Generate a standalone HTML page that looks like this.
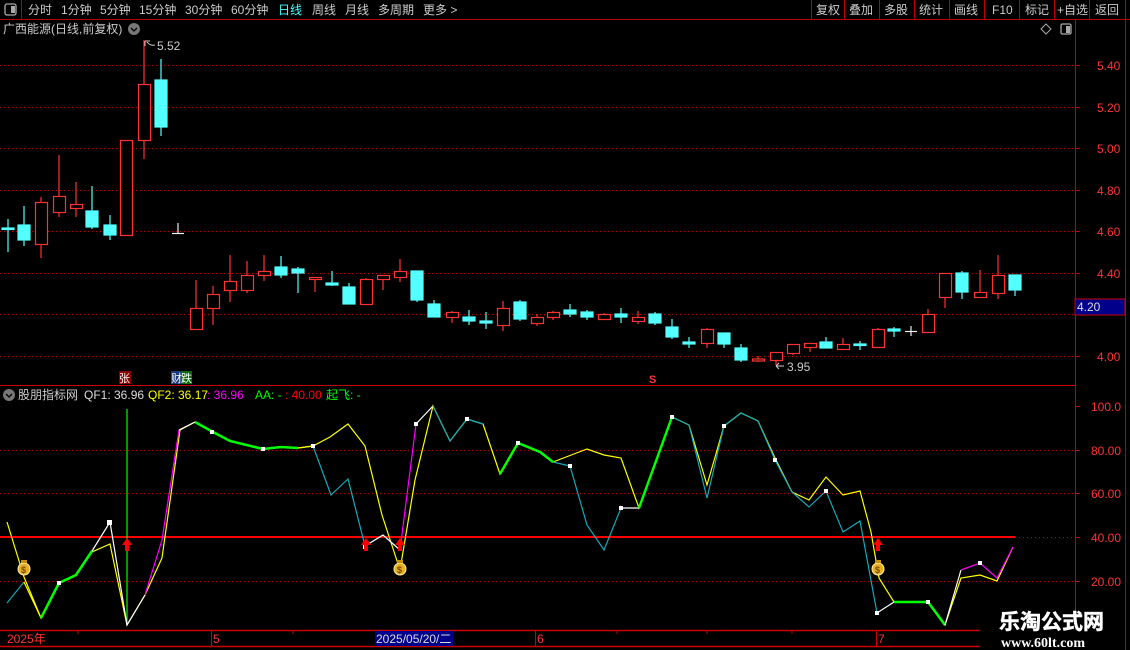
<!DOCTYPE html>
<html><head><meta charset="utf-8"><style>
html,body{margin:0;padding:0;background:#000;width:1130px;height:650px;overflow:hidden}
svg{display:block}
text{font-family:"Liberation Sans","Noto Sans CJK SC",sans-serif;font-size:12px}
</style></head><body>
<svg width="1130" height="650" viewBox="0 0 1130 650" xmlns="http://www.w3.org/2000/svg">
<rect width="1130" height="650" fill="#000"/>
<line x1="0" y1="19.5" x2="1130" y2="19.5" stroke="#b00" />
<line x1="21.5" y1="0" x2="21.5" y2="19" stroke="#b00"/>
<rect x="5" y="4" width="11" height="11" rx="2" fill="none" stroke="#aaa" stroke-width="1.3"/>
<rect x="11" y="6" width="4" height="7" fill="#aaa"/>
<g fill="#ccc">
<text x="28" y="14">分时</text><text x="61" y="14">1分钟</text><text x="100" y="14">5分钟</text><text x="139" y="14">15分钟</text><text x="185" y="14">30分钟</text><text x="231" y="14">60分钟</text>
<text x="278" y="14" fill="#4ff">日线</text><text x="312" y="14">周线</text><text x="345" y="14">月线</text><text x="378" y="14">多周期</text><text x="423" y="14">更多 &gt;</text>
<text x="816" y="14">复权</text><text x="849" y="14">叠加</text><text x="884" y="14">多股</text><text x="919" y="14">统计</text><text x="954" y="14">画线</text><text x="992" y="14">F10</text><text x="1025" y="14">标记</text><text x="1057" y="14">+自选</text><text x="1095" y="14">返回</text>
</g>
<g stroke="#b00"><line x1="811.5" y1="0" x2="811.5" y2="19"/><line x1="844.5" y1="0" x2="844.5" y2="19"/><line x1="879.5" y1="0" x2="879.5" y2="19"/><line x1="914.5" y1="0" x2="914.5" y2="19"/><line x1="949.5" y1="0" x2="949.5" y2="19"/><line x1="984.5" y1="0" x2="984.5" y2="19"/><line x1="1019.5" y1="0" x2="1019.5" y2="19"/><line x1="1054.5" y1="0" x2="1054.5" y2="19"/><line x1="1089.5" y1="0" x2="1089.5" y2="19"/><line x1="1125.5" y1="0" x2="1125.5" y2="650"/></g>
<text x="3" y="33" fill="#ccc">广西能源(日线,前复权)</text>
<circle cx="134" cy="29" r="6" fill="#777"/><path d="M131 28 L134 31 L137 28" stroke="#000" fill="none" stroke-width="1.3"/>
<path d="M1046 24 L1051 29 L1046 34 L1041 29 Z" fill="none" stroke="#aaa"/>
<rect x="1061" y="24" width="10" height="10" rx="1.5" fill="none" stroke="#aaa" stroke-width="1.3"/><rect x="1066" y="26" width="4" height="7" fill="#aaa"/>
<line x1="1075.5" y1="20" x2="1075.5" y2="630" stroke="#c00"/>
<g stroke="#b00" stroke-dasharray="1,3">
<line x1="0" y1="65.5" x2="1075" y2="65.5"/><line x1="0" y1="107.5" x2="1075" y2="107.5"/><line x1="0" y1="148.5" x2="1075" y2="148.5"/><line x1="0" y1="190.5" x2="1075" y2="190.5"/><line x1="0" y1="231.5" x2="1075" y2="231.5"/><line x1="0" y1="273.5" x2="1075" y2="273.5"/><line x1="0" y1="314.5" x2="1075" y2="314.5"/><line x1="0" y1="356.5" x2="1075" y2="356.5"/>
<line x1="0" y1="450.5" x2="1075" y2="450.5"/><line x1="0" y1="493.5" x2="1075" y2="493.5"/><line x1="1015" y1="537.5" x2="1075" y2="537.5"/><line x1="0" y1="581.5" x2="1075" y2="581.5"/>
</g>
<g stroke="#c00"><line x1="1075" y1="65.5" x2="1080" y2="65.5"/><line x1="1075" y1="107.5" x2="1080" y2="107.5"/><line x1="1075" y1="148.5" x2="1080" y2="148.5"/><line x1="1075" y1="190.5" x2="1080" y2="190.5"/><line x1="1075" y1="231.5" x2="1080" y2="231.5"/><line x1="1075" y1="273.5" x2="1080" y2="273.5"/><line x1="1075" y1="356.5" x2="1080" y2="356.5"/>
<line x1="1075" y1="406.5" x2="1080" y2="406.5"/><line x1="1075" y1="450.5" x2="1080" y2="450.5"/><line x1="1075" y1="493.5" x2="1080" y2="493.5"/><line x1="1075" y1="537.5" x2="1080" y2="537.5"/><line x1="1075" y1="581.5" x2="1080" y2="581.5"/></g>
<g fill="#f33">
<text x="1097" y="70">5.40</text><text x="1097" y="112">5.20</text><text x="1097" y="153">5.00</text><text x="1097" y="195">4.80</text><text x="1097" y="236">4.60</text><text x="1097" y="278">4.40</text><text x="1097" y="361">4.00</text>
<text x="1091" y="411">100.0</text><text x="1091" y="455">80.00</text><text x="1091" y="498">60.00</text><text x="1091" y="542">40.00</text><text x="1091" y="586">20.00</text>
</g>
<rect x="1075" y="299" width="50" height="16" fill="#00008a" stroke="#c00"/>
<text x="1077" y="311" fill="#ddd">4.20</text>
<g stroke-width="1.2">
<g stroke="#54ffff" fill="#54ffff">
<line x1="8" y1="219" x2="8" y2="252"/><rect x="2" y="228" width="12" height="1.5"/>
<line x1="24" y1="206" x2="24" y2="246"/><rect x="18" y="225" width="12" height="15"/>
<line x1="92" y1="186" x2="92" y2="229"/><rect x="86" y="211" width="12" height="16"/>
<line x1="110" y1="215" x2="110" y2="240"/><rect x="104" y="225" width="12" height="10"/>
<line x1="161" y1="59" x2="161" y2="136"/><rect x="155" y="80" width="12" height="47"/>
<line x1="281" y1="256" x2="281" y2="278"/><rect x="275" y="267" width="12" height="8"/>
<line x1="298" y1="267" x2="298" y2="293"/><rect x="292" y="269" width="12" height="4"/>
<line x1="332" y1="271" x2="332" y2="286"/><rect x="326" y="283" width="12" height="2"/>
<line x1="349" y1="283" x2="349" y2="304"/><rect x="343" y="287" width="12" height="17"/>
<line x1="417" y1="271" x2="417" y2="302"/><rect x="411" y="271" width="12" height="29"/>
<line x1="434" y1="300" x2="434" y2="317"/><rect x="428" y="304" width="12" height="13"/>
<line x1="469" y1="310" x2="469" y2="325"/><rect x="463" y="317" width="12" height="4"/>
<line x1="486" y1="312" x2="486" y2="329"/><rect x="480" y="321" width="12" height="2"/>
<line x1="520" y1="300" x2="520" y2="321"/><rect x="514" y="302" width="12" height="17"/>
<line x1="570" y1="304" x2="570" y2="317"/><rect x="564" y="310" width="12" height="4"/>
<line x1="587" y1="310" x2="587" y2="320"/><rect x="581" y="312" width="12" height="5"/>
<line x1="621" y1="308" x2="621" y2="323"/><rect x="615" y="314" width="12" height="3"/>
<line x1="655" y1="312" x2="655" y2="325"/><rect x="649" y="314" width="12" height="9"/>
<line x1="672" y1="319" x2="672" y2="339"/><rect x="666" y="327" width="12" height="10"/>
<line x1="689" y1="337" x2="689" y2="348"/><rect x="683" y="342" width="12" height="2"/>
<line x1="724" y1="333" x2="724" y2="348"/><rect x="718" y="333" width="12" height="11"/>
<line x1="741" y1="344" x2="741" y2="362"/><rect x="735" y="348" width="12" height="12"/>
<line x1="826" y1="337" x2="826" y2="348"/><rect x="820" y="342" width="12" height="6"/>
<line x1="860" y1="341" x2="860" y2="350"/><rect x="854" y="344" width="12" height="1.5"/>
<line x1="894" y1="327" x2="894" y2="337"/><rect x="888" y="329" width="12" height="2"/>
<line x1="962" y1="271" x2="962" y2="299"/><rect x="956" y="273" width="12" height="19"/>
<line x1="1015" y1="275" x2="1015" y2="296"/><rect x="1009" y="275" width="12" height="15"/>
</g>
<g stroke="#ff3232" fill="#000">
<line x1="41" y1="197" x2="41" y2="258"/><rect x="35.5" y="202.5" width="12" height="42"/>
<line x1="59" y1="155" x2="59" y2="217"/><rect x="53.5" y="196.5" width="12" height="16"/>
<line x1="76" y1="182" x2="76" y2="217"/><rect x="70.5" y="204.5" width="12" height="4"/>
<rect x="120.5" y="140.5" width="12" height="95"/>
<line x1="144" y1="40" x2="144" y2="159"/><rect x="138.5" y="84.5" width="12" height="56"/>
<line x1="196" y1="280" x2="196" y2="329"/><rect x="190.5" y="308.5" width="12" height="21"/>
<line x1="213" y1="286" x2="213" y2="325"/><rect x="207.5" y="294.5" width="12" height="14"/>
<line x1="230" y1="255" x2="230" y2="302"/><rect x="224.5" y="281.5" width="12" height="9"/>
<line x1="247" y1="261" x2="247" y2="293"/><rect x="241.5" y="275.5" width="12" height="15"/>
<line x1="264" y1="255" x2="264" y2="281"/><rect x="258.5" y="271.5" width="12" height="4"/>
<line x1="315" y1="277" x2="315" y2="292"/><rect x="309.5" y="277.5" width="12" height="2"/>
<line x1="366" y1="278" x2="366" y2="304"/><rect x="360.5" y="279.5" width="12" height="25"/>
<line x1="383" y1="275" x2="383" y2="290"/><rect x="377.5" y="275.5" width="12" height="4"/>
<line x1="400" y1="259" x2="400" y2="282"/><rect x="394.5" y="271.5" width="12" height="6"/>
<line x1="452" y1="311" x2="452" y2="323"/><rect x="446.5" y="312.5" width="12" height="5"/>
<line x1="503" y1="301" x2="503" y2="331"/><rect x="497.5" y="308.5" width="12" height="17"/>
<line x1="537" y1="314" x2="537" y2="326"/><rect x="531.5" y="317.5" width="12" height="6"/>
<line x1="553" y1="311" x2="553" y2="320"/><rect x="547.5" y="312.5" width="12" height="5"/>
<line x1="604" y1="313" x2="604" y2="319"/><rect x="598.5" y="314.5" width="12" height="5"/>
<line x1="638" y1="311" x2="638" y2="324"/><rect x="632.5" y="317.5" width="12" height="4"/>
<line x1="707" y1="328" x2="707" y2="348"/><rect x="701.5" y="329.5" width="12" height="14"/>
<line x1="758" y1="356" x2="758" y2="362"/><rect x="752.5" y="359" width="12" height="2"/>
<line x1="776" y1="352" x2="776" y2="365"/><rect x="770.5" y="352.5" width="12" height="8"/>
<line x1="793" y1="344" x2="793" y2="355"/><rect x="787.5" y="344.5" width="12" height="9"/>
<line x1="810" y1="343" x2="810" y2="352"/><rect x="804.5" y="343.5" width="12" height="4"/>
<line x1="843" y1="338" x2="843" y2="349"/><rect x="837.5" y="344.5" width="12" height="5"/>
<line x1="878" y1="328" x2="878" y2="348"/><rect x="872.5" y="329.5" width="12" height="18"/>
<line x1="928" y1="309" x2="928" y2="332"/><rect x="922.5" y="314.5" width="12" height="18"/>
<line x1="945" y1="273" x2="945" y2="308"/><rect x="939.5" y="273.5" width="12" height="24"/>
<line x1="980" y1="270" x2="980" y2="297"/><rect x="974.5" y="292.5" width="12" height="5"/>
<line x1="998" y1="255" x2="998" y2="299"/><rect x="992.5" y="275.5" width="12" height="18"/>
</g>
<g stroke="#eee"><line x1="178" y1="223" x2="178" y2="233"/><line x1="172" y1="233.5" x2="184" y2="233.5"/><line x1="911" y1="326" x2="911" y2="336"/><line x1="905" y1="331.5" x2="917" y2="331.5"/></g>
</g>
<path d="M145 41 L145 46 M145 41 L150 41 M147 42 Q150 46 155 45" stroke="#ccc" fill="none"/>
<text x="157" y="50" fill="#ccc">5.52</text>
<path d="M784 366 L776 366 M776 366 L779 363 M776 366 L779 369" stroke="#ccc" fill="none"/>
<text x="787" y="371" fill="#ccc">3.95</text>
<rect x="119" y="371" width="12" height="13" fill="#8a0000"/><text x="119" y="382" fill="#fff" style="font-size:11px">张</text>
<rect x="171" y="371" width="10" height="13" fill="#1a3a7a"/><rect x="181" y="371" width="11" height="13" fill="#0a6a0a"/>
<text x="171" y="382" fill="#fff" style="font-size:11px">财</text><text x="181" y="382" fill="#fff" style="font-size:11px">跌</text>
<text x="649" y="383" fill="#f33" style="font-size:11px;font-weight:bold">S</text>
<line x1="0" y1="385.5" x2="1075" y2="385.5" stroke="#c00"/>
<circle cx="9" cy="395" r="6" fill="#777"/><path d="M6 394 L9 397 L12 394" stroke="#000" fill="none" stroke-width="1.3"/>
<text x="18" y="399" fill="#ccc">股朋指标网</text>
<text x="84" y="399" fill="#ddd">QF1: 36.96</text>
<text x="148" y="399" fill="#ff0">QF2: 36.17</text>
<text x="207" y="399" fill="#f0f">: 36.96</text>
<text x="255" y="399" fill="#0f0">AA: -</text>
<text x="285" y="399" fill="#f00">: 40.00</text>
<text x="326" y="399" fill="#0f0">起飞: -</text>
<line x1="0" y1="537" x2="1015" y2="537" stroke="#f00" stroke-width="2"/>
<line x1="127" y1="409" x2="127" y2="625" stroke="#0f0" stroke-width="1.2"/>
<polyline fill="none" stroke="#ff0" stroke-width="1.2" points="7,522 24,577 41,618 59,583 76,575 92,552 110,544 127,625 145,595 162,558 180,430 195,422 213,432 230,441 263,449 281,447 298,448 313,446 330,437 348,424 365,446 382,515 400,570 415,480 433,406 450,441 467,419 483,424 500,474 518,443 540,452 553,462 587,449 604,455 621,458 639,508 672,417 689,425 707,485 724,426 741,413 758,421 775,458 792,492 809,500 826,477 843,495 860,491 871,532 879,578 894,602 928,602 945,625 961,578 980,575 997,581 1013,547"/>
<polyline fill="none" stroke="#1ab" stroke-width="1.2" points="7,603 24,582"/>
<polyline fill="none" stroke="#ff0" stroke-width="1.2" points="24,582 41,618"/>
<polyline fill="none" stroke="#0f0" stroke-width="2.5" points="41,618 59,583 76,575 92,551"/>
<polyline fill="none" stroke="#fff" stroke-width="1.2" points="92,551 110,522 127,625 145,595"/>
<polyline fill="none" stroke="#f0f" stroke-width="1.2" points="145,595 162,540 179,430"/>
<polyline fill="none" stroke="#fff" stroke-width="1.2" points="179,430 195,422"/>
<polyline fill="none" stroke="#0f0" stroke-width="2.5" points="195,422 213,432 230,441 263,449 281,447 298,448"/>
<polyline fill="none" stroke="#ff0" stroke-width="1.2" points="298,448 313,446"/>
<polyline fill="none" stroke="#1ab" stroke-width="1.2" points="313,446 331,495 348,479 365,546"/>
<polyline fill="none" stroke="#fff" stroke-width="1.2" points="365,546 383,535 400,550"/>
<polyline fill="none" stroke="#f0f" stroke-width="1.2" points="400,550 416,424"/>
<polyline fill="none" stroke="#fff" stroke-width="1.2" points="416,424 433,406"/>
<polyline fill="none" stroke="#1ab" stroke-width="1.2" points="433,406 450,441 467,419 483,424"/>
<polyline fill="none" stroke="#0f0" stroke-width="2.5" points="500,474 518,443 540,452 553,462"/>
<polyline fill="none" stroke="#1ab" stroke-width="1.2" points="553,462 570,466 587,525 604,550 621,508"/>
<polyline fill="none" stroke="#fff" stroke-width="1.2" points="621,508 639,508"/>
<polyline fill="none" stroke="#0f0" stroke-width="2.5" points="639,508 672,417"/>
<polyline fill="none" stroke="#1ab" stroke-width="1.2" points="672,417 689,425 707,498 724,426 741,413 758,421 775,460 792,492 809,507 826,491 843,532 860,521 877,613"/>
<polyline fill="none" stroke="#fff" stroke-width="1.2" points="877,613 894,602"/>
<polyline fill="none" stroke="#0f0" stroke-width="2.5" points="894,602 928,602 945,625"/>
<polyline fill="none" stroke="#fff" stroke-width="1.2" points="945,625 961,570"/>
<polyline fill="none" stroke="#f0f" stroke-width="1.2" points="961,570 980,563 997,578 1013,547"/>
<g fill="#fff"><rect x="107" y="520" width="5" height="5"/><rect x="57" y="581" width="4" height="4"/><rect x="210" y="430" width="4" height="4"/><rect x="261" y="447" width="4" height="4"/><rect x="311" y="444" width="4" height="4"/><rect x="363" y="544" width="4" height="5"/><rect x="414" y="422" width="4" height="4"/><rect x="465" y="417" width="4" height="4"/><rect x="516" y="441" width="4" height="4"/><rect x="568" y="464" width="4" height="4"/><rect x="619" y="506" width="4" height="4"/><rect x="670" y="415" width="4" height="4"/><rect x="722" y="424" width="4" height="4"/><rect x="773" y="458" width="4" height="4"/><rect x="824" y="489" width="4" height="4"/><rect x="875" y="611" width="4" height="4"/><rect x="926" y="600" width="4" height="4"/><rect x="978" y="561" width="4" height="4"/></g>
<g fill="#f00"><path d="M127 538 L122 545 L125 545 L125 551 L129 551 L129 545 L132 545 Z"/><path d="M366 538 L361 545 L364 545 L364 551 L368 551 L368 545 L371 545 Z"/><path d="M400 538 L395 545 L398 545 L398 551 L402 551 L402 545 L405 545 Z"/><path d="M878 538 L873 545 L876 545 L876 551 L880 551 L880 545 L883 545 Z"/></g>
<g>
<circle cx="24" cy="569" r="6" fill="#e8b020" stroke="#fff3a0"/><rect x="21" y="560" width="6" height="3" fill="#c89010"/><text x="21" y="573" fill="#7a4a00" style="font-size:9px;font-weight:bold">$</text>
<circle cx="400" cy="569" r="6" fill="#e8b020" stroke="#fff3a0"/><rect x="397" y="560" width="6" height="3" fill="#c89010"/><text x="397" y="573" fill="#7a4a00" style="font-size:9px;font-weight:bold">$</text>
<circle cx="878" cy="569" r="6" fill="#e8b020" stroke="#fff3a0"/><rect x="875" y="560" width="6" height="3" fill="#c89010"/><text x="875" y="573" fill="#7a4a00" style="font-size:9px;font-weight:bold">$</text>
</g>
<line x1="0" y1="630.5" x2="980" y2="630.5" stroke="#c00" stroke-width="1.5"/>
<line x1="0" y1="646.5" x2="980" y2="646.5" stroke="#c00" stroke-width="1.5"/>
<g stroke="#c00"><line x1="78" y1="630" x2="78" y2="634"/><line x1="211.5" y1="630" x2="211.5" y2="646"/><line x1="293" y1="630" x2="293" y2="634"/><line x1="535.5" y1="630" x2="535.5" y2="646"/><line x1="617" y1="630" x2="617" y2="634"/><line x1="707" y1="630" x2="707" y2="634"/><line x1="792" y1="630" x2="792" y2="634"/><line x1="876.5" y1="630" x2="876.5" y2="646"/></g>
<g fill="#f33"><text x="7" y="643">2025年</text><text x="213" y="643">5</text><text x="537" y="643">6</text><text x="878" y="643">7</text></g>
<rect x="375" y="631" width="78" height="15" fill="#00008a"/>
<text x="376" y="643" fill="#ddd">2025/05/20/二</text>
<text x="999" y="629" fill="#fff" stroke="#fff" stroke-width="0.5" style="font-family:'Noto Sans CJK SC',sans-serif;font-size:21px;font-weight:bold">乐淘公式网</text>
<text x="1001" y="647" fill="#fff" style="font-family:'Liberation Serif',serif;font-size:14px;font-weight:bold">www.60lt.com</text>
</svg>
</body></html>
